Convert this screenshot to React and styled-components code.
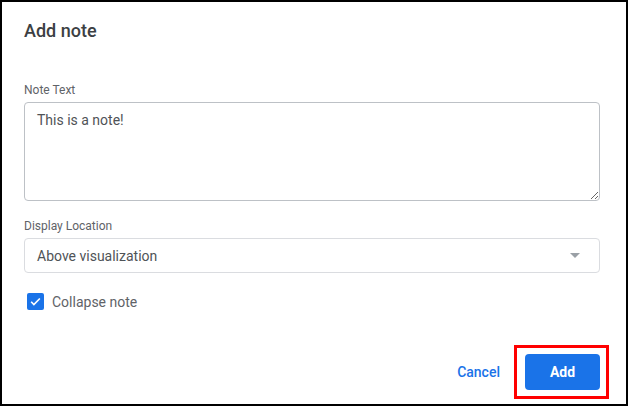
import React from 'react'
import styled, { createGlobalStyle } from 'styled-components'

const GlobalStyle = createGlobalStyle`
  html, body {
    margin: 0;
    padding: 0;
    background: #ffffff;
  }
  * {
    box-sizing: border-box;
  }
`

const Dialog = styled.div`
  width: 628px;
  height: 406px;
  border: 2px solid #000000;
  background: #ffffff;
  font-family: Roboto, 'Liberation Sans', sans-serif;
  display: flex;
  flex-direction: column;
  padding: 17px 26px 0 22px;
`

const Title = styled.h2`
  margin: 0;
  font-size: 18px;
  font-weight: 500;
  line-height: 24px;
  color: #3c4043;
`

const Form = styled.div`
  display: flex;
  flex-direction: column;
  margin-top: 39px;
`

const Label = styled.label`
  font-size: 12px;
  line-height: 16px;
  color: #5f6368;
  margin-bottom: 4px;
`

const TextArea = styled.textarea`
  width: 576px;
  height: 99px;
  border: 1px solid #bdc1c6;
  border-radius: 4px;
  padding: 7px 12px;
  font-family: Roboto, 'Liberation Sans', sans-serif;
  font-size: 14px;
  line-height: 20px;
  color: #4f5357;
  resize: vertical;
  outline: none;
  margin-bottom: 17px;
`

const Select = styled.div`
  width: 576px;
  height: 35px;
  border: 1px solid #dadce0;
  border-radius: 4px;
  padding: 0 12px;
  display: flex;
  align-items: center;
  justify-content: space-between;
  font-size: 14px;
  color: #4f5357;
`

const Caret = styled.span`
  width: 0;
  height: 0;
  border-left: 5px solid transparent;
  border-right: 5px solid transparent;
  border-top: 5px solid #9aa0a6;
  margin-right: 7px;
`

const CheckRow = styled.div`
  display: flex;
  align-items: center;
  gap: 8px;
  margin-top: 20px;
  margin-left: 3px;
  font-size: 14px;
  color: #5f6368;
`

const Box = styled.span`
  width: 17px;
  height: 17px;
  border-radius: 2px;
  background: #1a73e8;
  display: flex;
  align-items: center;
  justify-content: center;
`

const Footer = styled.div`
  margin-top: auto;
  margin-bottom: 5px;
  margin-right: -9px;
  display: flex;
  align-items: center;
  justify-content: flex-end;
  gap: 10px;
`

const TextButton = styled.button`
  border: none;
  background: none;
  font-family: Roboto, 'Liberation Sans', sans-serif;
  font-size: 14px;
  font-weight: 500;
  color: #1a73e8;
  padding: 0 4px;
  cursor: pointer;
`

const Highlight = styled.div`
  border: 3px solid #ff0000;
  padding: 6px 6px 6px 8px;
  display: flex;
`

const PrimaryButton = styled.button`
  width: 75px;
  height: 36px;
  border: none;
  border-radius: 4px;
  background: #1a73e8;
  color: #ffffff;
  font-family: Roboto, 'Liberation Sans', sans-serif;
  font-size: 14px;
  font-weight: 700;
  cursor: pointer;
`

const App = () => {
  return (
    <>
      <GlobalStyle />
      <Dialog>
        <Title>Add note</Title>
        <Form>
          <Label>Note Text</Label>
          <TextArea defaultValue="This is a note!" />
          <Label>Display Location</Label>
          <Select>
            <span>Above visualization</span>
            <Caret />
          </Select>
          <CheckRow>
            <Box>
              <svg width="13" height="13" viewBox="0 0 24 24">
                <path d="M4 12.5l5 5L20 6.5" fill="none" stroke="#ffffff" strokeWidth="3" />
              </svg>
            </Box>
            Collapse note
          </CheckRow>
        </Form>
        <Footer>
          <TextButton>Cancel</TextButton>
          <Highlight>
            <PrimaryButton>Add</PrimaryButton>
          </Highlight>
        </Footer>
      </Dialog>
    </>
  )
}

export default App
